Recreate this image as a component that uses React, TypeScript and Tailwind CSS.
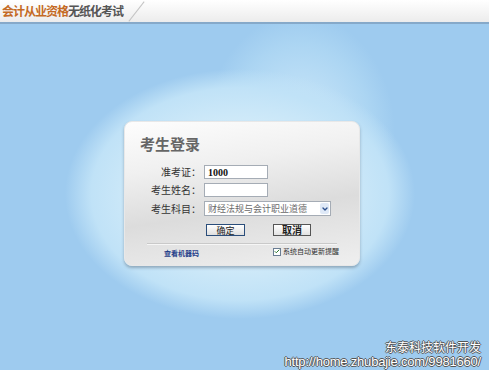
import { Check, ChevronDown } from "lucide-react";

const cjk = "font-['Noto_Sans_CJK_SC',sans-serif]";

function Field({ label, children }: { label: string; children: React.ReactNode }) {
  return (
    <div className="flex items-center">
      <span className={`w-[79px] pr-[3px] text-right text-[10px] leading-none text-[#333] ${cjk}`}>{label}</span>
      {children}
    </div>
  );
}

export default function App() {
  return (
    <div className={`w-[489px] h-[370px] flex flex-col overflow-hidden ${cjk}`}>
      <header className="h-[24px] shrink-0 flex items-center border-b-[2px] border-[#86a9c9] bg-[linear-gradient(#ffffff,#ececec)]">
        <div className="h-full flex items-center pl-[2px] pr-[10px] relative">
          <span className="text-[12px] font-bold tracking-[-1px] text-[#c46a24]">会计从业资格</span>
          <span className="text-[12px] font-bold tracking-[-1px] text-[#555]">无纸化考试</span>
          <span className="absolute right-[-4px] top-[-1px] h-[25px] w-[1px] bg-[#c4c4c4] rotate-[38deg]" />
        </div>
      </header>

      <main className="flex-1 relative flex flex-col bg-[#9ecbef] bg-[radial-gradient(ellipse_175px_125px_at_240px_170px,#e6f4fc_0%,#d4ecf9_50%,#c0e2f7_85%,rgba(158,203,239,0)_100%),radial-gradient(ellipse_95px_120px_at_300px_110px,rgba(214,237,251,0.9)_0%,rgba(185,223,246,0.5)_75%,rgba(158,203,239,0)_100%)]">
        <div className="ml-[124px] mt-[97px] w-[236px] h-[145px] rounded-[8px] border border-[#e8e8e8] shadow-[0_2px_3px_rgba(80,100,120,0.45)] bg-[linear-gradient(172deg,#fdfdfd_0%,#f0f0f0_30%,#dcdcdc_60%,#e2e2e2_72%,#efefef_100%)] flex flex-col">
          <h1 className="pl-[15px] pt-[11px] h-[43px] text-[15px] font-bold leading-[22px] text-[#666]">考生登录</h1>

          <div className="flex flex-col gap-[4px]">
            <Field label="准考证：">
              <div className="w-[64px] h-[14px] border border-[#a5acb5] bg-white flex items-center px-[3px] text-[10px] font-bold font-['Liberation_Serif',serif] text-[#111]">
                1000
              </div>
            </Field>
            <Field label="考生姓名：">
              <div className="w-[64px] h-[14px] border border-[#a5acb5] bg-white" />
            </Field>
            <Field label="考生科目：">
              <div className="w-[127px] h-[15px] border border-[#a5acb5] bg-white flex items-center justify-between pl-[3px] pr-[1px]">
                <span className="text-[9px] leading-none text-[#6a6a6a]">财经法规与会计职业道德</span>
                <span className="w-[9px] h-[11px] rounded-[2px] bg-[#dfe9f7] flex items-center justify-center">
                  <ChevronDown className="w-[8px] h-[8px] text-[#2b4f8c]" strokeWidth={4} />
                </span>
              </div>
            </Field>
          </div>

          <div className="flex pl-[81px] mt-[8px] gap-[28px]">
            <button className="w-[39px] h-[12px] border border-[#2a4d7a] bg-[linear-gradient(#ffffff,#dedede)] text-[9px] leading-none text-[#222] flex items-center justify-center">
              确定
            </button>
            <button className="w-[38px] h-[12px] border border-[#555] bg-[linear-gradient(#ffffff,#e2e2e2)] text-[10px] font-bold leading-none text-[#222] flex items-center justify-center">
              取消
            </button>
          </div>

          <div className="mx-[22px] mt-[7px] border-t border-[#c9c9c9] shadow-[0_1px_0_#f6f6f6]" />

          <div className="flex items-center justify-between pl-[39px] pr-[20px] mt-[2px]">
            <a className="mt-[4px] text-[7px] font-bold leading-none text-[#1f3e8a]">查看机器码</a>
            <label className="flex items-center gap-[2px]">
              <span className="w-[8px] h-[8px] border border-[#6a7d93] bg-white flex items-center justify-center">
                <Check className="w-[7px] h-[7px] text-[#2d7a2d]" strokeWidth={4} />
              </span>
              <span className="text-[7px] leading-none text-[#333]">系统自动更新提醒</span>
            </label>
          </div>
        </div>

        <div className="mt-auto flex flex-col items-end gap-[2px] pr-[8px] pb-[2px] text-white [text-shadow:-1px_0_#555,1px_0_#555,0_-1px_#555,0_1px_#555]">
          <span className="text-[12px] leading-[12px]">东泰科技软件开发</span>
          <span className="text-[13px] leading-[13px] tracking-[-0.2px] font-['Liberation_Sans',sans-serif]">http://home.zhubajie.com/9981660/</span>
        </div>
      </main>
    </div>
  );
}
